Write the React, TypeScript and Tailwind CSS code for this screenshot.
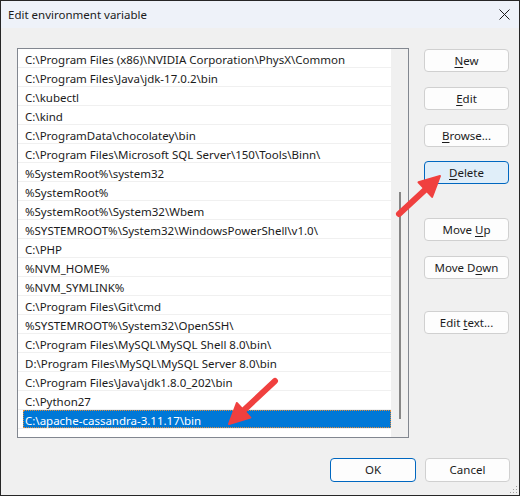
const paths = [
  "C:\\Program Files (x86)\\NVIDIA Corporation\\PhysX\\Common",
  "C:\\Program Files\\Java\\jdk-17.0.2\\bin",
  "C:\\kubectl",
  "C:\\kind",
  "C:\\ProgramData\\chocolatey\\bin",
  "C:\\Program Files\\Microsoft SQL Server\\150\\Tools\\Binn\\",
  "%SystemRoot%\\system32",
  "%SystemRoot%",
  "%SystemRoot%\\System32\\Wbem",
  "%SYSTEMROOT%\\System32\\WindowsPowerShell\\v1.0\\",
  "C:\\PHP",
  "%NVM_HOME%",
  "%NVM_SYMLINK%",
  "C:\\Program Files\\Git\\cmd",
  "%SYSTEMROOT%\\System32\\OpenSSH\\",
  "C:\\Program Files\\MySQL\\MySQL Shell 8.0\\bin\\",
  "D:\\Program Files\\MySQL\\MySQL Server 8.0\\bin",
  "C:\\Program Files\\Java\\jdk1.8.0_202\\bin",
  "C:\\Python27",
  "C:\\apache-cassandra-3.11.17\\bin",
];

function Btn({
  pre,
  key_,
  post,
  className = "",
  active = false,
}: {
  pre: string;
  key_?: string;
  post?: string;
  className?: string;
  active?: boolean;
}) {
  return (
    <button
      type="button"
      className={
        "w-[85px] h-[23px] rounded-[4px] border text-[11.5px] text-[#1b1b1b] flex items-center justify-center " +
        (active
          ? "border-[#0067c0] bg-[#e0eef9] "
          : "border-[#d0d0d0] bg-[#fdfdfd] ") +
        className
      }
    >
      <span>
        {pre}
        {key_ && <span className="underline underline-offset-2">{key_}</span>}
        {post}
      </span>
    </button>
  );
}

export default function App() {
  return (
    <div
      className="relative w-[520px] h-[496px] border border-[#262626] bg-[#f0f0f0] flex flex-col overflow-hidden"
      style={{ fontFamily: '"Noto Sans", "Open Sans", sans-serif' }}
    >
      {/* title bar */}
      <div className="h-[27px] bg-[#eef2f9] flex items-center justify-between pl-[7px] pr-[9px]">
        <span className="text-[11.5px] text-[#1b1b1b]">Edit environment variable</span>
        <svg width="11" height="11" viewBox="0 0 11 11">
          <path d="M0.5 0.5 L10.5 10.5 M10.5 0.5 L0.5 10.5" stroke="#1b1b1b" strokeWidth="1" />
        </svg>
      </div>

      <div className="flex pl-[16px] pt-[20px]">
        {/* list */}
        <div className="w-[392px] h-[390px] border border-[#828790] bg-white flex">
          <div className="flex-1 flex flex-col">
            {paths.map((p, i) => {
              const sel = i === paths.length - 1;
              return (
                <div key={i} className="h-[19px] border-b border-[#f0f0f0] pl-[5px] flex">
                  <div
                    className={
                      "flex-1 h-[18px] px-[2px] text-[11.5px] leading-[21px] whitespace-nowrap " +
                      (sel
                        ? "bg-[#0078d7] text-white outline outline-1 outline-dotted outline-offset-[-1px] outline-[#e08b3a]"
                        : "text-[#1b1b1b]")
                    }
                  >
                    {p}
                  </div>
                </div>
              );
            })}
          </div>
          <div className="w-[17px] bg-[#f0f0f0] flex justify-center">
            <div className="w-[2px] h-[227px] mt-[143px] bg-[#868686]" />
          </div>
        </div>

        {/* right buttons */}
        <div className="ml-[15px] flex flex-col pt-[1px]">
          <Btn pre="" key_="N" post="ew" />
          <Btn pre="" key_="E" post="dit" className="mt-[15px]" />
          <Btn pre="" key_="B" post="rowse..." className="mt-[14px]" />
          <Btn pre="" key_="D" post="elete" className="mt-[14px]" active />
          <Btn pre="Move " key_="U" post="p" className="mt-[34px]" />
          <Btn pre="Move D" key_="o" post="wn" className="mt-[15px]" />
          <Btn pre="Edit " key_="t" post="ext..." className="mt-[32px]" />
        </div>
      </div>

      {/* bottom */}
      <div className="flex justify-end gap-[9px] pr-[9px] mt-[20px]">
        <button
          type="button"
          className="w-[86px] h-[24px] rounded-[4px] border border-[#0067c0] bg-[#fdfdfd] text-[11.5px] text-[#1b1b1b]"
        >
          OK
        </button>
        <button
          type="button"
          className="w-[85px] h-[24px] rounded-[4px] border border-[#d0d0d0] bg-[#fdfdfd] text-[11.5px] text-[#1b1b1b]"
        >
          Cancel
        </button>
      </div>

      {/* resize grip */}
      <svg className="absolute right-[1px] bottom-[1px]" width="8" height="8" viewBox="0 0 8 8">
        <rect x="6" y="0" width="1" height="1" fill="#a0a0a0" />
        <rect x="3" y="3" width="1" height="1" fill="#a0a0a0" />
        <rect x="6" y="3" width="1" height="1" fill="#a0a0a0" />
        <rect x="0" y="6" width="1" height="1" fill="#a0a0a0" />
        <rect x="3" y="6" width="1" height="1" fill="#a0a0a0" />
        <rect x="6" y="6" width="1" height="1" fill="#a0a0a0" />
      </svg>

      {/* annotation arrows */}
      <svg className="absolute left-[-1px] top-[-1px] pointer-events-none" width="520" height="496">
        <line x1="399" y1="214" x2="426" y2="189" stroke="#f0403f" strokeWidth="6" strokeLinecap="round" />
        <polygon points="440,176 432.1,196.9 418.5,182.3" fill="#f0403f" stroke="#f0403f" strokeWidth="2" strokeLinejoin="round" />
        <line x1="275" y1="381" x2="243" y2="411" stroke="#f0403f" strokeWidth="6" strokeLinecap="round" />
        <polygon points="229,424 250.4,417.6 236.8,403" fill="#f0403f" stroke="#f0403f" strokeWidth="2" strokeLinejoin="round" />
      </svg>
    </div>
  );
}
